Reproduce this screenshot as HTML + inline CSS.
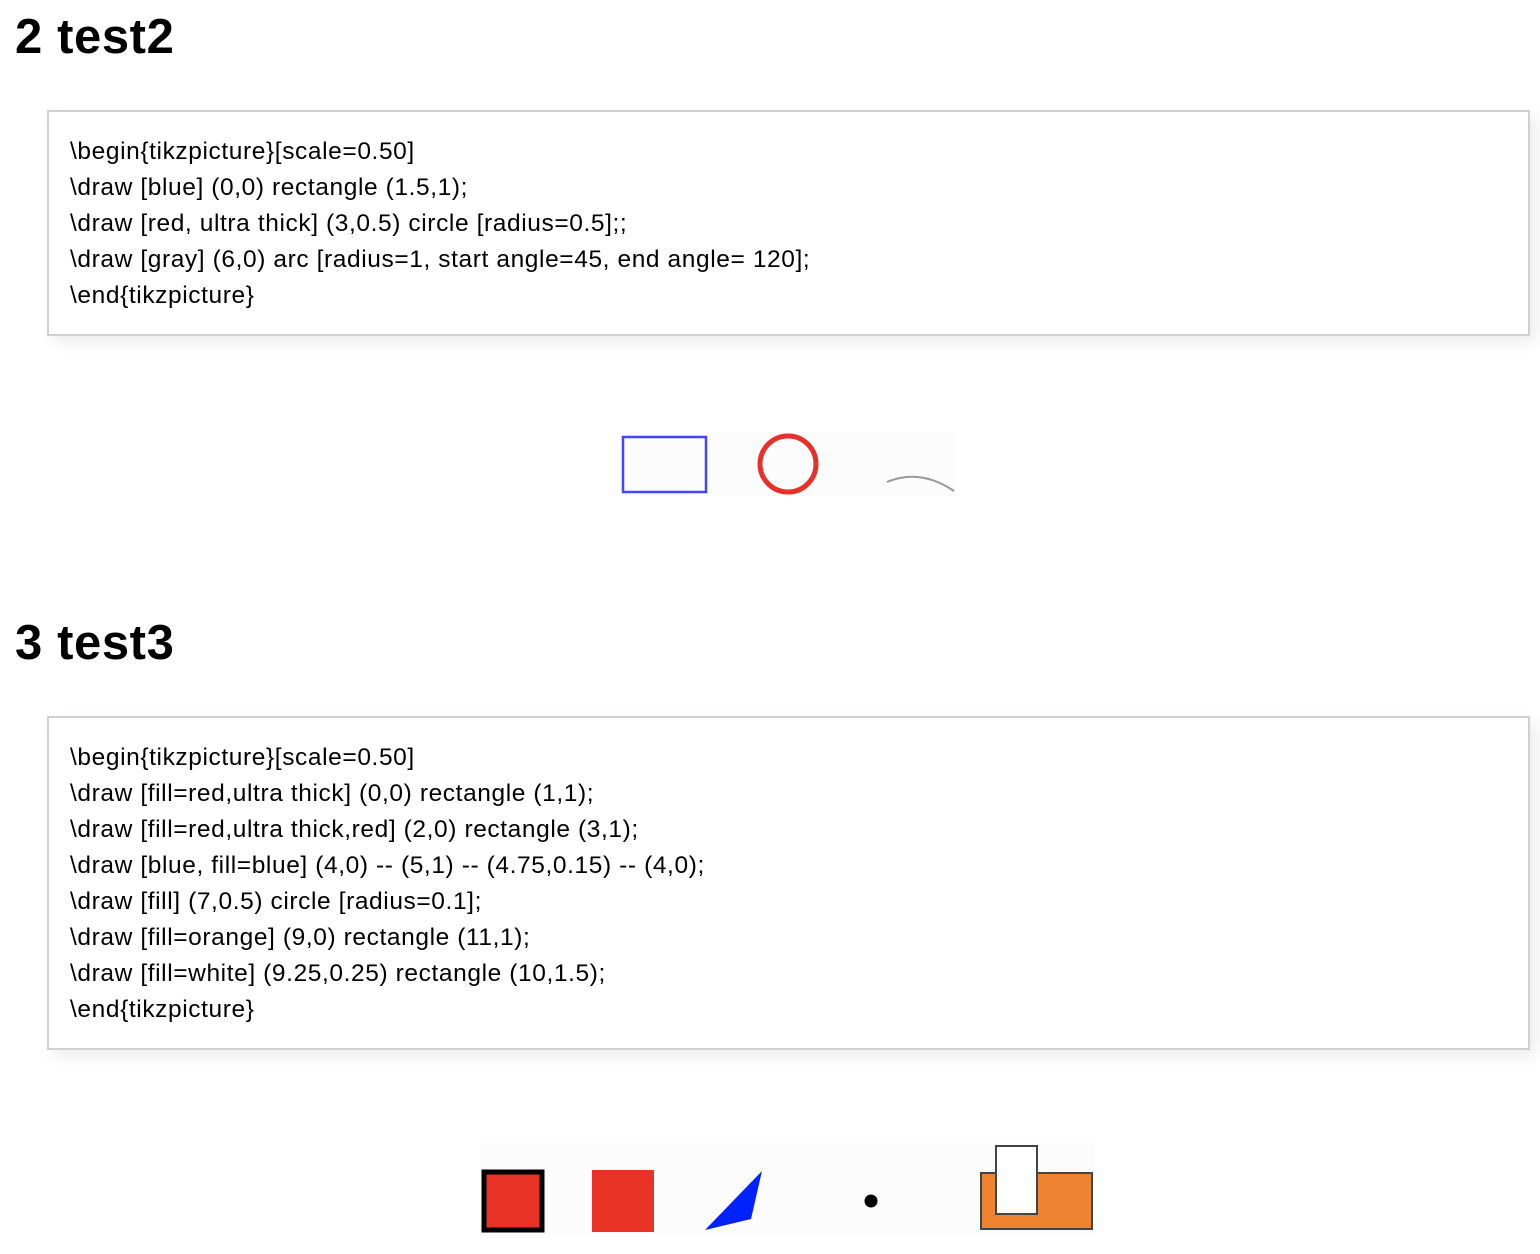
<!DOCTYPE html>
<html><head><meta charset="utf-8"><style>
body{margin:0;background:#fff;width:1540px;height:1254px;position:relative;overflow:hidden;font-family:"Liberation Sans",sans-serif;color:#000}
h2{position:absolute;left:15px;margin:0;font-size:49px;font-weight:bold;line-height:47px;letter-spacing:0.6px}
.box{position:absolute;left:47px;width:1483px;border:2px solid #d0d0d0;background:#fff;box-shadow:6px 6px 14px rgba(0,0,0,0.08);box-sizing:border-box}
.box div{position:absolute;left:21px;font-size:24.5px;line-height:36px;white-space:pre;letter-spacing:0.6px}
svg{position:absolute;left:0;top:0}
</style></head><body>
<h2 style="top:14px">2 test2</h2>
<div class="box" style="top:110px;height:226px"><div style="top:22px">\begin{tikzpicture}[scale=0.50]
\draw [blue] (0,0) rectangle (1.5,1);
\draw [red, ultra thick] (3,0.5) circle [radius=0.5];;
\draw [gray] (6,0) arc [radius=1, start angle=45, end angle= 120];
\end{tikzpicture}</div></div>
<h2 style="top:620px">3 test3</h2>
<div class="box" style="top:716px;height:334px"><div style="top:22px">\begin{tikzpicture}[scale=0.50]
\draw [fill=red,ultra thick] (0,0) rectangle (1,1);
\draw [fill=red,ultra thick,red] (2,0) rectangle (3,1);
\draw [blue, fill=blue] (4,0) -- (5,1) -- (4.75,0.15) -- (4,0);
\draw [fill] (7,0.5) circle [radius=0.1];
\draw [fill=orange] (9,0) rectangle (11,1);
\draw [fill=white] (9.25,0.25) rectangle (10,1.5);
\end{tikzpicture}</div></div>
<svg width="1540" height="1254">
<rect x="620" y="432" width="336" height="64" fill="#fcfcfc"/>
<rect x="623" y="437" width="83" height="55" fill="none" stroke="#4444ff" stroke-width="2.5"/>
<circle cx="788" cy="464" r="28" fill="none" stroke="#e8302a" stroke-width="5"/>
<path d="M887 482 Q920 468 954 491" fill="none" stroke="#999" stroke-width="2"/>
<rect x="480" y="1143" width="615" height="92" fill="#fcfcfc"/>
<rect x="484" y="1172" width="58" height="58" fill="#e83225" stroke="#000" stroke-width="5"/>
<rect x="592" y="1170" width="62" height="62" fill="#e83225"/>
<path d="M705 1230 L762 1171 L751 1219 Z" fill="#0022ff"/>
<circle cx="871" cy="1201" r="6.5" fill="#000"/>
<rect x="981" y="1173" width="111" height="56" fill="#ee8432" stroke="#444" stroke-width="2"/>
<rect x="996" y="1146" width="41" height="68" fill="#fff" stroke="#444" stroke-width="2"/>
</svg>
</body></html>
